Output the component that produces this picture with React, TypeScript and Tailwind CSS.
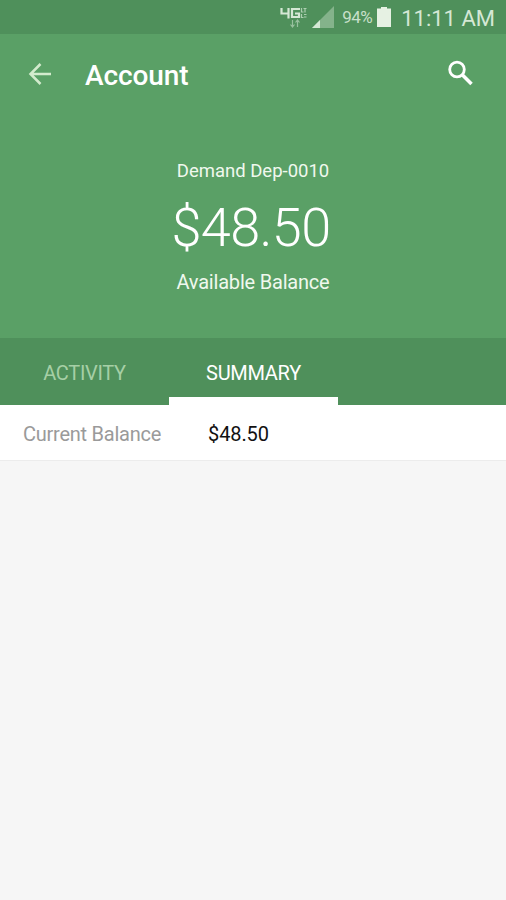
import clsx from 'clsx';

const account = {
  name: 'Demand Dep-0010',
  available: '$48.50',
  current: '$48.50',
};

const tabs = [
  { label: 'ACTIVITY', active: false },
  { label: 'SUMMARY', active: true },
];

function StatusBar() {
  return (
    <div className="h-[34px] bg-[#4f905b] flex items-center justify-end pr-[11px] text-[#d5e8d5]">
      {/* 4G LTE badge with the data arrows */}
      <svg width="28" height="24" viewBox="0 0 28 24" fill="none" stroke="currentColor" className="mr-[4px]">
        <path d="M1.500 3v5.500h8M8.500 3v10.500M20 4h-8v8h7V8.500h-4" strokeWidth="2.200" />
        <path d="M21.500 3v4h2M23.500 3.500h3M25 3.500v4M24 9.500h2.500M24 12h2.500M21.500 9v3.500h2" strokeWidth="1.200" opacity="0.7" />
        <path d="M12.500 15v7M10.500 19.500l2 2.500 2-2.500M17.500 22v-7M15.500 17.500l2-2.500 2 2.500" strokeWidth="1.200" opacity="0.55" />
      </svg>
      <svg width="22" height="22" viewBox="0 0 22 22" fill="currentColor" className="mr-[8px]">
        <path d="M0 22 22 0v22z" opacity="0.4" />
        <path d="M0 22l8-8v8z" />
      </svg>
      <span className="pt-px text-[17px] leading-none tracking-[-0.5px] mr-[5px] opacity-90">94%</span>
      <svg width="14" height="20" viewBox="0 0 14 20" fill="#e6f1e3" className="mr-[10px]">
        <path d="M4 0h6v1.500h4V20H0V1.500h4z" />
      </svg>
      <span className="pt-[3px] text-[22px] leading-none">11:11 AM</span>
    </div>
  );
}

function AppBar() {
  return (
    <div className="h-20 flex items-center pl-[28px] pr-[32px]">
      <svg width="24" height="24" viewBox="0 0 24 24" fill="none" stroke="#d3ebcd" strokeWidth="2.500">
        <path d="M23 12H2.500M12.500 2 2.500 12l10 10" />
      </svg>
      <h1 className="ml-[33px] pt-[3px] text-[28px] leading-none font-medium tracking-[-0.1px]">Account</h1>
      <svg width="26" height="26" viewBox="0 0 26 26" fill="none" stroke="#fff" strokeWidth="2.800" className="ml-auto mb-[3px]">
        <circle cx="9" cy="9.500" r="7.300" />
        <path d="M14.500 15l9 9" strokeWidth="3.500" />
      </svg>
    </div>
  );
}

function BalanceHeader() {
  return (
    <div className="h-56 pt-[46px] flex flex-col items-center">
      <p className="text-[18.500px] leading-[22px] text-[#f0f8ee]">{account.name}</p>
      <p className="mt-[14px] mr-1 text-[54px] leading-[64px] font-light tracking-[-0.600px]">{account.available}</p>
      <p className="mt-[10px] text-[20px] leading-[24px] tracking-[-0.200px] text-[#f0f8ee]">Available Balance</p>
    </div>
  );
}

export default function App() {
  return (
    <div className="min-h-screen w-full bg-[#f6f6f6] font-['Roboto',sans-serif]">
      <header className="bg-[#5aa066] text-white">
        <StatusBar />
        <AppBar />
        <BalanceHeader />
        <nav className="h-[67px] flex bg-[#4f905b]">
          {tabs.map((tab) => (
            <div
              key={tab.label}
              className={clsx(
                'w-[169px] pt-[2px] flex items-center justify-center border-y-8 border-t-transparent text-[20px] leading-none tracking-[-0.300px]',
                tab.active ? 'border-b-white' : 'border-b-transparent text-[#a6cfa6]'
              )}
            >
              {tab.label}
            </div>
          ))}
        </nav>
      </header>

      <div className="h-[56px] pt-[2px] flex items-center bg-white border-b border-[#ececec] text-[20px] pl-[23px]">
        <span className="w-[185px] tracking-[-0.250px] text-[#9a9a9a]">Current Balance</span>
        <span className="tracking-[-0.100px] text-[#111]">{account.current}</span>
      </div>
    </div>
  );
}
